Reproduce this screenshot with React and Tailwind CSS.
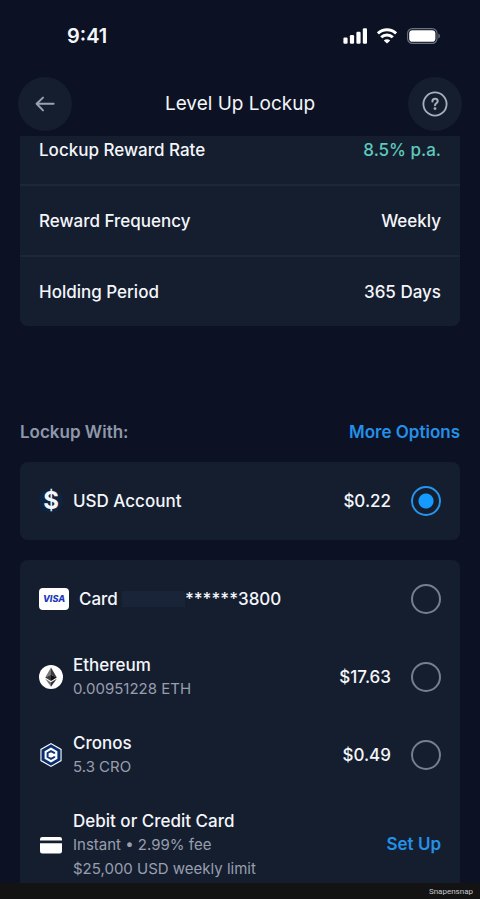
import React, { useState } from "react";

const details = [
  { label: "Lockup Reward Rate", value: "8.5% p.a.", highlight: true },
  { label: "Reward Frequency", value: "Weekly" },
  { label: "Holding Period", value: "365 Days" },
];

const SignalIcon = () => (
  <svg className="w-6 h-4" viewBox="0 0 24 16" fill="white">
    <rect x="0.4" y="9.6" width="4.2" height="6.2" rx="1.2" />
    <rect x="6.9" y="7" width="4.2" height="8.8" rx="1.2" />
    <rect x="13.4" y="3.8" width="4.2" height="12" rx="1.2" />
    <rect x="19.8" y="0.3" width="4.2" height="15.5" rx="1.2" />
  </svg>
);

const WifiIcon = () => (
  <svg className="w-5 h-4" viewBox="0 0 20 16" fill="none" stroke="white" strokeWidth="3">
    <path d="M0.9 5.4a13 13 0 0 1 18.2 0" />
    <path d="M4.2 9.3a8.3 8.3 0 0 1 11.6 0" />
    <path d="M10 15.6 6.8 12.5a4.6 4.6 0 0 1 6.4 0Z" fill="white" stroke="none" />
  </svg>
);

const BatteryIcon = () => (
  <svg className="w-[33px] h-4" viewBox="0 0 33 16">
    <rect x="0.6" y="0.6" width="29.4" height="14.8" rx="4.8" fill="none" stroke="#6d7280" strokeWidth="1.1" />
    <rect x="2.2" y="2.2" width="26.2" height="11.6" rx="3.4" fill="white" />
    <path d="M31.4 5.4v5.2c1-.4 1.5-1.4 1.5-2.6s-.5-2.2-1.5-2.6Z" fill="#6d7280" />
  </svg>
);

const BackIcon = () => (
  <svg className="w-5 h-5" viewBox="0 0 20 20" fill="none" stroke="#9aa1b0" strokeWidth="2" strokeLinecap="round" strokeLinejoin="round">
    <path d="M18.6 9.8H1.6M8 3.6 1.6 9.8 8 16.4" />
  </svg>
);

const HelpIcon = () => (
  <svg className="w-[26px] h-[26px]" viewBox="0 0 26 26" fill="none" stroke="#a9aebc" strokeLinecap="round">
    <circle cx="13" cy="13" r="11.6" strokeWidth="1.8" />
    <path d="M10.4 10.4c0-1.6 1.1-2.6 2.7-2.6s2.6 1 2.6 2.4c0 2-2.7 2-2.7 4" strokeWidth="2" />
    <circle cx="13" cy="17.6" r="1.4" fill="#a9aebc" stroke="none" />
  </svg>
);

const DollarIcon = () => (
  <span className="flex items-center justify-center w-6 h-6 rounded-full bg-[#0f2240] text-2xl font-bold" aria-hidden="true">
    $
  </span>
);

const VisaIcon = () => (
  <span className="flex items-center justify-center w-[30px] h-[22px] rounded-sm bg-white text-[#2038b8] text-[9px] font-extrabold italic">
    VISA
  </span>
);

const EthIcon = () => (
  <svg className="w-6 h-6" viewBox="0 0 24 24">
    <circle cx="12" cy="12" r="12" fill="white" />
    <path d="M12 2.6 6.2 12.4 12 9.8Z" fill="#777" />
    <path d="M12 2.6v7.2l5.8 2.6Z" fill="#3a3a3a" />
    <path d="M6.2 12.4 12 9.8v6.1Z" fill="#3a3a3a" />
    <path d="M17.8 12.4 12 9.8v6.1Z" fill="#111" />
    <path d="M6.2 13.7 12 17.2v4.5Z" fill="#777" />
    <path d="M17.8 13.7 12 17.2v4.5Z" fill="#333" />
  </svg>
);

const CronosIcon = () => (
  <svg className="w-6 h-6" viewBox="0 0 24 24">
    <path d="M12 0 22.6 6v12L12 24 1.4 18V6Z" fill="white" />
    <path d="M12 1.3 21.5 6.7v10.6L12 22.7 2.5 17.3V6.7Z" fill="#082d70" />
    <path d="M12 4.6 18.4 8.2v7.6L12 19.4 5.6 15.8V8.2Z" fill="white" />
    <path d="M15.2 10.7V9.9L12 8.1 8.6 10v4l3.4 1.9 3.2-1.8v-.8" fill="none" stroke="#12366f" strokeWidth="2" />
  </svg>
);

const CardIcon = () => (
  <svg className="w-6 h-6" viewBox="0 0 24 24" fill="white">
    <path d="M1 7.6V6.2A2.2 2.2 0 0 1 3.2 4h17.6A2.2 2.2 0 0 1 23 6.2v1.4Z" />
    <path d="M1 10.2h22v8a2.2 2.2 0 0 1-2.2 2.2H3.2A2.2 2.2 0 0 1 1 18.2Z" />
  </svg>
);

const Option = ({ id, icon, title, sub, value, selected, onSelect }) => (
  <label htmlFor={id} className="flex items-center h-[78px] px-[19px] cursor-pointer">
    {icon}
    <span className="flex-1 ml-[10px] leading-6">
      <span className="flex items-center">{title}</span>
      {sub && <span className="block text-[15px] leading-6 font-normal text-[#989eae]">{sub}</span>}
    </span>
    <span className="mr-5 leading-6">{value}</span>
    <input
      id={id}
      type="radio"
      name="source"
      checked={selected === id}
      onChange={() => onSelect(id)}
      className="appearance-none w-[30px] h-[30px] rounded-full border-2 border-[#777e90] checked:border-[#2496ed] checked:bg-[radial-gradient(circle,#159bff_7px,transparent_8px)]"
    />
  </label>
);

const App = () => {
  const [selected, setSelected] = useState("usd");

  return (
    <div className="min-h-screen bg-[#0c1224] text-[#f4f6fa] text-[17px] font-medium font-['Inter',sans-serif]">
      {/* Status bar */}
      <div className="flex items-center justify-between h-[72px] pl-[67px] pr-10">
        <span className="text-xl font-semibold">9:41</span>
        <div className="flex items-center gap-[10px]">
          <SignalIcon />
          <WifiIcon />
          <BatteryIcon />
        </div>
      </div>

      {/* Header */}
      <header className="flex items-center justify-between px-[18px] py-[5px]">
        <button aria-label="Back" className="flex items-center justify-center w-[54px] h-[54px] rounded-full bg-[#151e2f]">
          <BackIcon />
        </button>
        <h1 className="text-[19px] font-normal">Level Up Lockup</h1>
        <button aria-label="Help" className="flex items-center justify-center w-[54px] h-[54px] rounded-full bg-[#151e2f]">
          <HelpIcon />
        </button>
      </header>

      <main className="px-5">
        {/* Lockup details */}
        <dl className="rounded-b-lg bg-[#151e2f] divide-y-2 divide-[#1e2637]">
          {details.map((row) => (
            <div key={row.label} className="flex justify-between px-[19px] pt-[23px] pb-[22px] leading-6 first:pt-[2px]">
              <dt>{row.label}</dt>
              <dd className={row.highlight ? "text-[#5fc9bd]" : ""}>{row.value}</dd>
            </div>
          ))}
        </dl>

        {/* Payment sources */}
        <div className="flex justify-between mt-[94px] mb-[18px] leading-6">
          <h2 className="font-semibold text-[#8f98a9]">Lockup With:</h2>
          <a href="#options" className="font-semibold text-[#2490e8]">More Options</a>
        </div>

        <section id="options" className="rounded-lg bg-[#151e2f]">
          <Option id="usd" icon={<DollarIcon />} title="USD Account" value="$0.22" selected={selected} onSelect={setSelected} />
        </section>

        <section className="mt-5 rounded-t-lg bg-[#151e2f]">
          <Option
            id="visa"
            icon={<VisaIcon />}
            title={
              <>
                Card
                <span className="w-[63px] h-4 ml-1 bg-[#1a2438]" />
                ******3800
              </>
            }
            selected={selected}
            onSelect={setSelected}
          />
          <Option id="eth" icon={<EthIcon />} title="Ethereum" sub="0.00951228 ETH" value="$17.63" selected={selected} onSelect={setSelected} />
          <Option id="cro" icon={<CronosIcon />} title="Cronos" sub="5.3 CRO" value="$0.49" selected={selected} onSelect={setSelected} />
          <div className="flex items-center px-[19px] pt-[15px] pb-[2px]">
            <CardIcon />
            <div className="flex-1 ml-[10px] leading-6">
              <p>Debit or Credit Card</p>
              <p className="text-[15px] leading-6 font-normal text-[#989eae]">Instant • 2.99% fee</p>
              <p className="text-[15px] leading-6 font-normal text-[#989eae]">$25,000 USD weekly limit</p>
            </div>
            <button className="font-semibold text-[#2490e8]">Set Up</button>
          </div>
        </section>
      </main>

      <footer className="flex items-center justify-end h-[17px] px-[7px] bg-[#131314] text-[8px] font-normal text-[#c8c8c8] font-['Roboto',sans-serif]">
        Snapensnap
      </footer>
    </div>
  );
};

export default App;
